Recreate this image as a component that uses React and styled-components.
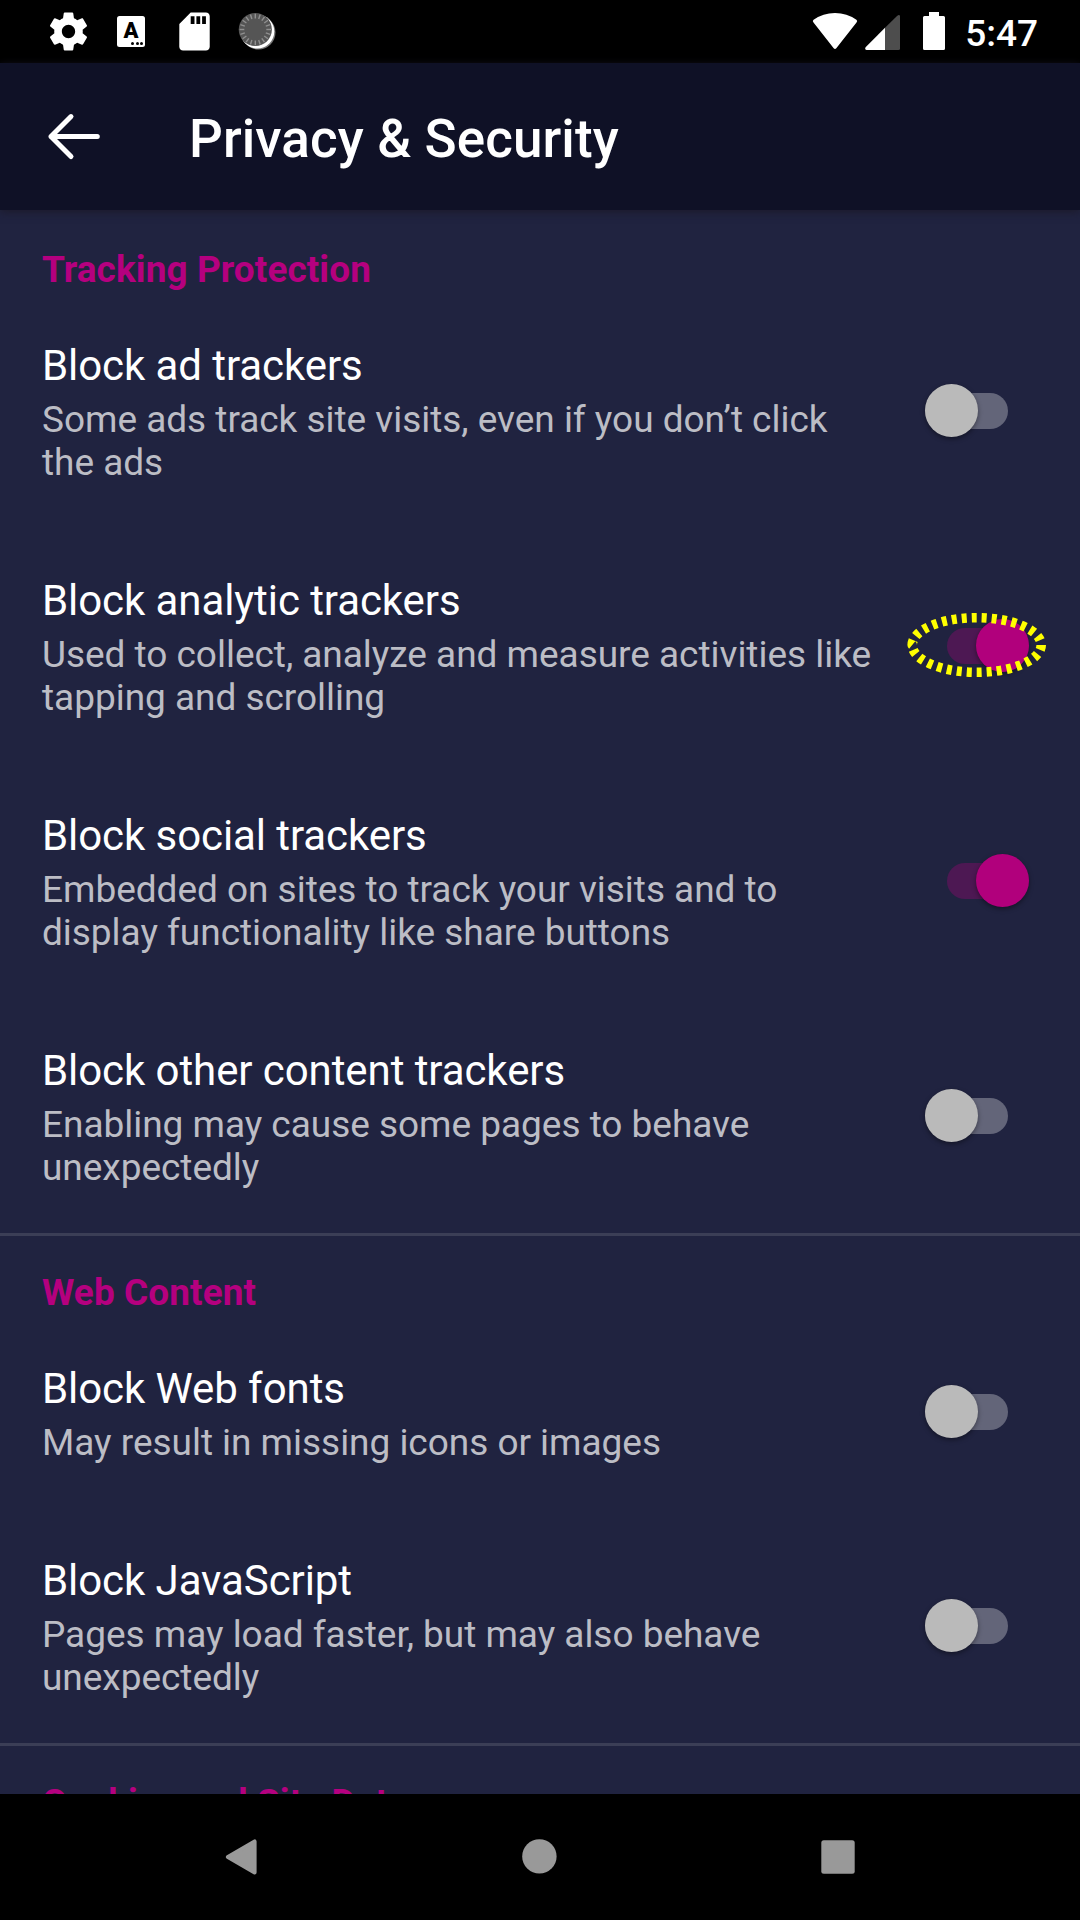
import React from "react";
import styled, { createGlobalStyle } from "styled-components";

const Global = createGlobalStyle`
  * { box-sizing: border-box; }
  html, body { margin: 0; padding: 0; background: #000; }
  body { font-family: Roboto, "Noto Sans", sans-serif; }
`;

const Screen = styled.div`
  width: 1080px;
  height: 1920px;
  display: flex;
  flex-direction: column;
  overflow: hidden;
  background: #202340;
`;

const StatusBar = styled.div`
  height: 63px;
  flex: none;
  display: flex;
  justify-content: space-between;
  background: #000;
  color: #fff;
`;

const StatusGroup = styled.div`
  display: flex;
  align-items: flex-start;
  padding-top: ${(p) => p.$top}px;
  padding-left: ${(p) => p.$left || 0}px;
  padding-right: ${(p) => p.$right || 0}px;
`;

const Glyph = styled.svg`
  display: block;
  flex: none;
  margin-right: ${(p) => p.$after || 0}px;
`;

const KeyboardBadge = styled.div`
  width: 28px;
  height: 31px;
  margin: 4px 34px 0 30px;
  border-radius: 2.5px;
  background: #fff;
  color: #000;
  display: flex;
  flex-direction: column;
  align-items: center;
  font-size: 22px;
  font-weight: 900;
  line-height: 29px;
`;

const BadgeDots = styled.div`
  align-self: flex-end;
  display: flex;
  gap: 1.4px;
  margin-right: 2px;
  margin-top: -3px;
`;

const BadgeDot = styled.i`
  width: 3px;
  height: 3px;
  border-radius: 50%;
  background: #000;
`;

const Clock = styled.span`
  font-size: 37px;
  font-weight: 500;
  line-height: 43px;
`;

const AppBar = styled.header`
  height: 147px;
  flex: none;
  display: flex;
  align-items: center;
  padding-left: 47px;
  gap: 88px;
  background: #0f1126;
  box-shadow: 0 2px 8px rgba(28, 26, 40, 0.9);
  z-index: 1;
`;

const Title = styled.h1`
  margin: 5px 0 0;
  color: #fff;
  font-size: 53px;
  font-weight: 500;
  line-height: 62px;
  letter-spacing: 0.1px;
`;

const Content = styled.main`
  flex: 1;
  min-height: 0;
  padding-top: 3px;
  overflow: hidden;
`;

const Section = styled.section`
  & + & { border-top: 3px solid #3b3e56; }
`;

const SectionTitle = styled.h2`
  height: 80px;
  margin: 0;
  padding: 35px 0 0 42px;
  color: #b5007f;
  font-size: 37px;
  font-weight: 700;
  line-height: 43px;
  letter-spacing: 0.06px;
  white-space: nowrap;
`;

const Row = styled.div`
  display: flex;
  align-items: center;
  justify-content: space-between;
  padding: 0 0 0 42px;
`;

const RowText = styled.div`
  width: 840px;
  padding: 48px 0 44px;
`;

const RowTitle = styled.div`
  color: #fff;
  font-size: 42px;
  line-height: 49px;
  letter-spacing: -0.08px;
  white-space: nowrap;
`;

const Summary = styled.div`
  margin-top: 8px;
  color: #bcbdc5;
  font-size: 37px;
  line-height: 43px;
  letter-spacing: -0.03px;
`;

const ToggleBox = styled.div`
  position: relative;
  flex: none;
  margin-right: ${(p) => (p.$on ? 51 : 72.5)}px;
`;

const Track = styled.div`
  width: 82.5px;
  height: 36px;
  border-radius: 18px;
  display: flex;
  align-items: center;
  justify-content: ${(p) => (p.$on ? "flex-end" : "flex-start")};
  background: ${(p) => (p.$on ? "#4d1853" : "#636579")};
`;

const Thumb = styled.div`
  width: 53px;
  height: 53px;
  margin-bottom: 0.4px;
  flex: none;
  border-radius: 50%;
  background: ${(p) => (p.$on ? "#b1007c" : "#bababa")};
  box-shadow: 0 2px 5px rgba(0, 0, 0, 0.4);
`;

const Highlight = styled.svg`
  position: absolute;
  left: -40px;
  top: -17px;
`;

const NavBar = styled.nav`
  height: 126px;
  flex: none;
  display: flex;
  align-items: center;
  padding-left: 223px;
  gap: 264px;
  background: #000;
`;

const sections = [
  {
    title: "Tracking Protection",
    rows: [
      { title: "Block ad trackers", lines: ["Some ads track site visits, even if you don’t click", "the ads"] },
      { title: "Block analytic trackers", lines: ["Used to collect, analyze and measure activities like", "tapping and scrolling"], on: true, marked: true },
      { title: "Block social trackers", lines: ["Embedded on sites to track your visits and to", "display functionality like share buttons"], on: true },
      { title: "Block other content trackers", lines: ["Enabling may cause some pages to behave", "unexpectedly"] },
    ],
  },
  {
    title: "Web Content",
    rows: [
      { title: "Block Web fonts", lines: ["May result in missing icons or images"] },
      { title: "Block JavaScript", lines: ["Pages may load faster, but may also behave", "unexpectedly"] },
    ],
  },
  { title: "Cookies and Site Data", rows: [] },
];

function Toggle({ on, marked }) {
  return (
    <ToggleBox $on={on}>
      <Track $on={on}>
        <Thumb $on={on} />
      </Track>
      {marked && (
        <Highlight width="140" height="68" viewBox="0 0 140 68">
          <ellipse cx="69.7" cy="34" rx="64.5" ry="27.3" fill="none" stroke="#ff0" strokeWidth="9.6" pathLength="300" strokeDasharray="5 5" />
        </Highlight>
      )}
    </ToggleBox>
  );
}

const ticks = Array.from({ length: 20 }, (_, i) => i * 18);

export default function App() {
  return (
    <Screen>
      <Global />
      <StatusBar>
        <StatusGroup $top={12} $left={50}>
          <Glyph width="37" height="39" viewBox="2.27 1.75 19.46 20.5">
            <path fill="#fff" d="M19.43 12.98c.04-.32.07-.64.07-.98s-.03-.66-.07-.98l2.11-1.65c.19-.15.24-.42.12-.64l-2-3.46c-.12-.22-.39-.3-.61-.22l-2.49 1c-.52-.4-1.08-.73-1.69-.98l-.38-2.65C14.46 2.18 14.25 2 14 2h-4c-.25 0-.46.18-.49.42l-.38 2.65c-.61.25-1.17.59-1.69.98l-2.49-1c-.23-.09-.49 0-.61.22l-2 3.46c-.13.22-.07.49.12.64l2.11 1.65c-.04.32-.07.65-.07.98s.03.66.07.98l-2.11 1.65c-.19.15-.24.42-.12.64l2 3.46c.12.22.39.3.61.22l2.49-1c.52.4 1.08.73 1.69.98l.38 2.65c.03.24.24.42.49.42h4c.25 0 .46-.18.49-.42l.38-2.65c.61-.25 1.17-.59 1.69-.98l2.49 1c.23.09.49 0 .61-.22l2-3.46c.12-.22.07-.49-.12-.64l-2.11-1.65zM12 15.5c-1.93 0-3.5-1.57-3.5-3.5s1.57-3.5 3.5-3.5 3.5 1.57 3.5 3.5-1.57 3.5-3.5 3.5z" />
          </Glyph>
          <KeyboardBadge>
            A
            <BadgeDots><BadgeDot /><BadgeDot /><BadgeDot /></BadgeDots>
          </KeyboardBadge>
          <Glyph width="31" height="39" viewBox="4 1.75 16 20.5" $after={28}>
            <path fill="#fff" d="M18 2h-8L4.02 8 4 20c0 1.1.9 2 2 2h12c1.1 0 2-.9 2-2V4c0-1.1-.9-2-2-2zm-6 6h-2V4h2v4zm3 0h-2V4h2v4zm3 0h-2V4h2v4z" />
          </Glyph>
          <Glyph width="40" height="40" viewBox="0 0 40 40">
            <circle cx="20.5" cy="20.5" r="17" fill="#777" />
            <circle cx="19.3" cy="19.5" r="17" fill="#fff" />
            <circle cx="17.3" cy="17.5" r="16.6" fill="#555" />
            {ticks.map((a) => (
              <line key={a} x1="17.3" y1="1.8" x2="17.3" y2="6.5" stroke="#909090" strokeWidth="1.4" transform={`rotate(${a} 17.3 17.5)`} />
            ))}
          </Glyph>
        </StatusGroup>
        <StatusGroup $top={12} $right={42}>
          <Glyph width="46" height="39" viewBox="0 0 46 39" $after={7}>
            <path fill="#fff" d="M1.5 10.5Q0 9 1.6 7.8Q11 1 23 1T44.4 7.8Q46 9 44.5 10.5L24.3 36.2Q23 37.8 21.7 36.2Z" />
          </Glyph>
          <Glyph width="35" height="39" viewBox="0 0 35 39" $after={23}>
            <path fill="#fff" d="M20 15.8V38H1.5Q-.6 37.5.6 35.2Z" />
            <path fill="#4d4d4d" d="M20 15.8L32 3.9Q34.5 2 35 4V36.5Q35 38 33.5 38H20Z" />
          </Glyph>
          <Glyph width="22" height="38" viewBox="0 0 22 38" $after={20}>
            <path fill="#fff" d="M6 0H16V4H20.5Q22 4 22 5.5V36.5Q22 38 20.5 38H1.5Q0 38 0 36.5V5.5Q0 4 1.5 4H6Z" />
          </Glyph>
          <Clock>5:47</Clock>
        </StatusGroup>
      </StatusBar>
      <AppBar>
        <Glyph width="54" height="48" viewBox="0 0 54 48">
          <path d="M24 3.6L4 23.6L24 43.6M4 23.6H50.3" fill="none" stroke="#fff" strokeWidth="5" strokeLinecap="round" strokeLinejoin="round" />
        </Glyph>
        <Title>Privacy &amp; Security</Title>
      </AppBar>
      <Content>
        {sections.map((s) => (
          <Section key={s.title}>
            <SectionTitle>{s.title}</SectionTitle>
            {s.rows.map((r) => (
              <Row key={r.title}>
                <RowText>
                  <RowTitle>{r.title}</RowTitle>
                  <Summary>
                    {r.lines.map((line) => <div key={line}>{line}</div>)}
                  </Summary>
                </RowText>
                <Toggle on={r.on} marked={r.marked} />
              </Row>
            ))}
          </Section>
        ))}
      </Content>
      <NavBar>
        <Glyph width="35" height="40" viewBox="0 0 35 40">
          <path d="M31.6 4.4V35.6L4.9 20Z" fill="#999" stroke="#999" strokeWidth="4" strokeLinejoin="round" />
        </Glyph>
        <Glyph width="35" height="36" viewBox="0 0 35 36"><circle cx="17.4" cy="17.4" r="17.2" fill="#999" /></Glyph>
        <Glyph width="35" height="36" viewBox="0 0 35 36"><rect x="0.3" y="1.3" width="33.4" height="33.4" rx="2.5" fill="#999" /></Glyph>
      </NavBar>
    </Screen>
  );
}
